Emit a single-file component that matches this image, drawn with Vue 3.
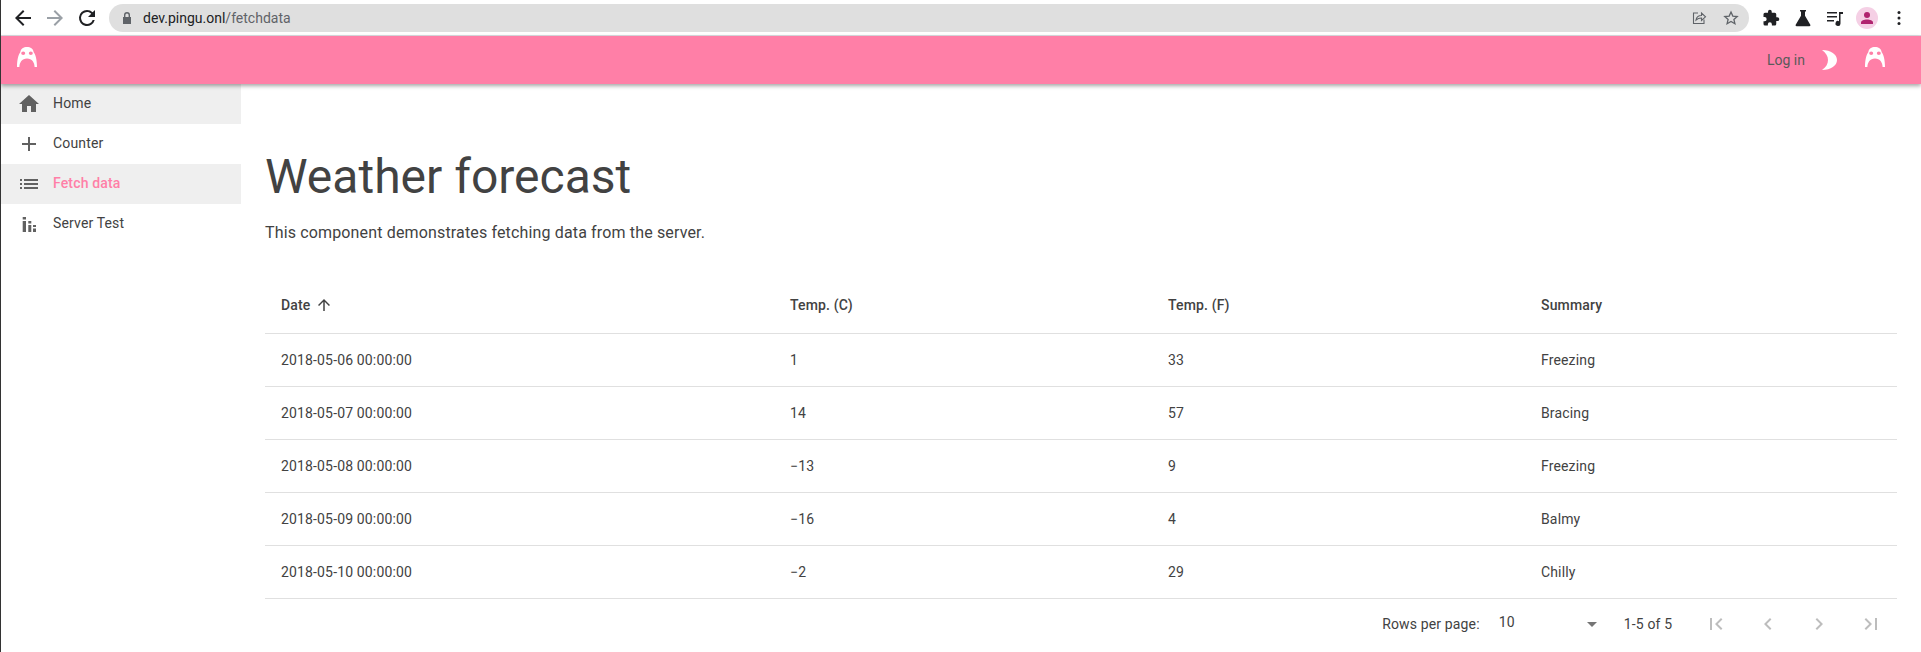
<template>
  <div class="window">
    <div class="browser">
      <button class="nav-btn">
        <svg viewBox="0 0 24 24" width="24" height="24"><path d="M20 11H7.830l5.590-5.590L12 4l-8 8 8 8 1.410-1.410L7.830 13H20z" fill="#202124" /></svg>
      </button>
      <button class="nav-btn">
        <svg viewBox="0 0 24 24" width="24" height="24"><path d="M4 13h12.170l-5.590 5.590L12 20l8-8-8-8-1.410 1.410L16.170 11H4z" fill="#9aa0a6" /></svg>
      </button>
      <button class="nav-btn">
        <svg viewBox="0 0 24 24" width="24" height="24"><path d="M17.650 6.350A7.960 7.960 0 0 0 12 4a8 8 0 1 0 7.730 10h-2.080A6 6 0 1 1 12 6c1.660 0 3.140.69 4.220 1.780L13 11h7V4z" fill="#202124" /></svg>
      </button>
      <div class="omnibox">
        <svg class="lock" viewBox="0 0 12 14" width="12" height="14"><path d="M3 6V4a3 3 0 0 1 6 0v2h1v7H2V6zm1.400 0h3.200V4a1.600 1.600 0 0 0-3.200 0z" fill="#5f6368" /></svg>
        <span class="url"><span class="host">dev.pingu.onl</span>/fetchdata</span>
        <svg class="share" viewBox="0 0 16 16" width="16" height="16" fill="none" stroke="#5f6368" stroke-width="1.100"><path d="M7 3H2.500v10.500h10.500V9.500" /><path d="M5 10c.5-3 2.500-4.500 5.500-4.500V3l4 3.800-4 3.700V8c-2.200 0-4 .6-5.500 2z" /></svg>
        <svg class="star" viewBox="0 0 16 16" width="16" height="16" fill="none" stroke="#5f6368" stroke-width="1.300"><path d="M8 2l1.800 4.100 4.400.4-3.300 2.900 1 4.300L8 11.400l-3.900 2.300 1-4.300-3.300-2.900 4.400-.4z" /></svg>
      </div>
      <div class="extensions">
        <div class="ext">
          <svg viewBox="0 0 24 24" width="18" height="18"><path d="M20.500 11H19V7a2 2 0 0 0-2-2h-4V3.500a2.500 2.500 0 0 0-5 0V5H4a2 2 0 0 0-2 2v3.800h1.500a2.700 2.700 0 0 1 0 5.400H2V20a2 2 0 0 0 2 2h3.800v-1.500a2.700 2.700 0 0 1 5.400 0V22H17a2 2 0 0 0 2-2v-4h1.500a2.500 2.500 0 0 0 0-5z" fill="#202124" /></svg>
        </div>
        <div class="ext">
          <svg viewBox="0 0 20 20" width="20" height="20"><path d="M7 2h6v1.500h-1v4.300l5.300 9a1 1 0 0 1-.9 1.500H3.600a1 1 0 0 1-.9-1.500l5.300-9V3.500H7z" fill="#202124" /></svg>
        </div>
        <div class="ext">
          <svg viewBox="0 0 20 20" width="20" height="20"><path d="M2 4h10v1.400H2zM2 8h10v1.400H2zM2 12h7v1.400H2zM14 4h4v2h-2.500v9.500a2.500 2.500 0 1 1-1.500-2.300z" fill="#202124" /></svg>
        </div>
        <div class="ext">
          <div class="avatar">
            <svg viewBox="0 0 16 16" width="16" height="16"><circle cx="8" cy="5" r="3" fill="#b0246f" /><path d="M2 14v-1.500C2 10.500 5 9.500 8 9.500s6 1 6 3V14z" fill="#b0246f" /></svg>
          </div>
        </div>
        <div class="ext">
          <svg viewBox="0 0 4 16" width="4" height="16"><circle cx="2" cy="2.500" r="1.500" fill="#202124" /><circle cx="2" cy="8" r="1.500" fill="#202124" /><circle cx="2" cy="13.500" r="1.500" fill="#202124" /></svg>
        </div>
      </div>
    </div>

    <header class="appbar">
      <svg class="penguin" viewBox="0 0 24 24" width="24" height="24"><path :d="penguin" fill="#fff" fill-rule="evenodd" /></svg>
      <div class="appbar-right">
        <span class="login">Log in</span>
        <svg class="moon" viewBox="0 0 24 24" width="24" height="24"><path d="M4 2c9 0 15 4.500 15 10S13 22 4 22c4-3 6-6 6-10S8 5 4 2z" fill="#fff" /></svg>
        <svg class="penguin" viewBox="0 0 24 24" width="24" height="24"><path :d="penguin" fill="#fff" fill-rule="evenodd" /></svg>
      </div>
    </header>

    <div class="body">
      <nav class="drawer">
        <a v-for="item in navItems" :key="item.label" class="nav-item" :class="{ shaded: item.shaded, active: item.active }">
          <svg viewBox="0 0 24 24" width="24" height="24"><path :d="item.icon" fill="#616161" /></svg>
          <span>{{ item.label }}</span>
        </a>
      </nav>

      <main class="content">
        <h1>Weather forecast</h1>
        <p class="lead">This component demonstrates fetching data from the server.</p>

        <table class="grid">
          <colgroup>
            <col class="c1" />
            <col class="c2" />
            <col class="c3" />
            <col />
          </colgroup>
          <thead>
            <tr>
              <th>
                Date
                <svg class="sort" viewBox="0 0 24 24" width="18" height="18"><path d="M4 12l1.410 1.410L11 7.830V20h2V7.830l5.580 5.590L20 12l-8-8-8 8z" fill="#424242" /></svg>
              </th>
              <th>Temp. (C)</th>
              <th>Temp. (F)</th>
              <th>Summary</th>
            </tr>
          </thead>
          <tbody>
            <tr v-for="row in rows" :key="row.date">
              <td>{{ row.date }}</td>
              <td>{{ row.c }}</td>
              <td>{{ row.f }}</td>
              <td>{{ row.summary }}</td>
            </tr>
          </tbody>
        </table>

        <div class="pager">
          <span class="rows-label">Rows per page:</span>
          <div class="rows-select">
            <span class="rows-value">10</span>
            <svg viewBox="0 0 24 24" width="24" height="24"><path d="M7 10l5 5 5-5z" fill="#757575" /></svg>
          </div>
          <span class="range">1-5 of 5</span>
          <div class="pager-btns">
            <svg viewBox="0 0 24 24" width="24" height="24"><path d="M18.410 16.590L13.820 12l4.590-4.590L17 6l-6 6 6 6zM6 6h2v12H6z" fill="#bdbdbd" /></svg>
            <svg viewBox="0 0 24 24" width="24" height="24"><path d="M15.410 7.410L14 6l-6 6 6 6 1.410-1.410L10.830 12z" fill="#bdbdbd" /></svg>
            <svg viewBox="0 0 24 24" width="24" height="24"><path d="M10 6L8.590 7.410 13.170 12l-4.580 4.590L10 18l6-6z" fill="#bdbdbd" /></svg>
            <svg viewBox="0 0 24 24" width="24" height="24"><path d="M5.590 7.410L10.180 12l-4.590 4.590L7 18l6-6-6-6zM16 6h2v12h-2z" fill="#bdbdbd" /></svg>
          </div>
        </div>
      </main>
    </div>
  </div>
</template>

<script setup>
// body with two pink eyes cut out, open arch between the feet
const penguin = 'M12 2C8.500 2 5.800 3.500 5.300 7.200 3.400 9.800 2 14.500 2 22h2.400C4.400 17.500 7 13.400 12 13.400s7.600 4.100 7.600 8.600H22c0-7.500-1.400-12.200-3.300-14.800C18.200 3.500 15.500 2 12 2zM8.200 6.600a2 1.700 0 1 0 0 3.400 2 1.700 0 0 0 0-3.400zm7.600 0a2 1.700 0 1 0 0 3.400 2 1.700 0 0 0 0-3.400z'

const navItems = [
  { label: 'Home', shaded: true, icon: 'M10 20v-6h4v6h5v-8h3L12 3 2 12h3v8z' },
  { label: 'Counter', icon: 'M19 13h-6v6h-2v-6H5v-2h6V5h2v6h6z' },
  { label: 'Fetch data', shaded: true, active: true, icon: 'M3 13h2v-2H3zm0 4h2v-2H3zm0-8h2V7H3zm4 4h14v-2H7zm0 4h14v-2H7zM7 7v2h14V7z' },
  { label: 'Server Test', icon: 'M5.700 9h3.300v11H5.700zM5.700 5h3.300v2.500H5.700zM11.300 9h3v2.500h-3zM11.300 13h3v7h-3zM16 13h3v2h-3zM16 16.500h3V20h-3z' }
]

const rows = [
  { date: '2018-05-06 00:00:00', c: '1', f: '33', summary: 'Freezing' },
  { date: '2018-05-07 00:00:00', c: '14', f: '57', summary: 'Bracing' },
  { date: '2018-05-08 00:00:00', c: '−13', f: '9', summary: 'Freezing' },
  { date: '2018-05-09 00:00:00', c: '−16', f: '4', summary: 'Balmy' },
  { date: '2018-05-10 00:00:00', c: '−2', f: '29', summary: 'Chilly' }
]
</script>

<style>
html, body {
  margin: 0;
  background: #fff;
}
</style>

<style scoped>
.window {
  height: 652px;
  overflow: hidden;
  border-left: 1px solid #333;
  font-family: Roboto, "Liberation Sans", sans-serif;
  letter-spacing: 0.15px;
  color: #424242;
  background: #fff;
  display: flex;
  flex-direction: column;
}

.browser {
  height: 36px;
  flex: none;
  box-sizing: border-box;
  border-bottom: 1px solid #dadce0;
  display: flex;
  align-items: center;
  padding-left: 6px;
  letter-spacing: normal;
}
.nav-btn {
  width: 32px;
  height: 32px;
  padding: 0;
  border: none;
  background: none;
  display: flex;
  align-items: center;
  justify-content: center;
}
.omnibox {
  margin-left: 6px;
  width: 1640px;
  height: 28px;
  border-radius: 14px;
  background: #dfdfdf;
  display: flex;
  align-items: center;
  padding-left: 12px;
  box-sizing: border-box;
}
.url {
  margin-left: 10px;
  color: #5f6368;
  font-size: 14px;
}
.host {
  color: #202124;
}
.share {
  margin-left: auto;
}
.star {
  margin: 0 10px 0 16px;
}
.extensions {
  display: flex;
  align-items: center;
  margin-left: 6px;
}
.ext {
  width: 32px;
  display: flex;
  align-items: center;
  justify-content: center;
}
.avatar {
  width: 22px;
  height: 22px;
  border-radius: 50%;
  background: #f5d0e5;
  display: flex;
  align-items: center;
  justify-content: center;
}

.appbar {
  height: 48px;
  flex: none;
  background: #ff7fa7;
  box-shadow: 0 2px 4px rgba(0, 0, 0, 0.35);
  display: flex;
  align-items: center;
  padding: 0 34px 0 14px;
  position: relative;
  z-index: 2;
}
.appbar-right {
  margin-left: auto;
  display: flex;
  align-items: center;
}
.login {
  font-size: 14px;
  letter-spacing: 0;
  color: #5a5a5a;
  margin-right: 13px;
}
.moon {
  margin-right: 21px;
}
.penguin {
  flex: none;
  margin-bottom: 6px;
}

.body {
  display: flex;
  flex: 1;
}
.drawer {
  width: 240px;
  flex: none;
}
.nav-item {
  height: 40px;
  display: flex;
  align-items: center;
  gap: 12px;
  padding-left: 16px;
  font-size: 14px;
  color: #424242;
}
.nav-item span {
  margin-top: -2px;
}
.nav-item.shaded {
  background: #efefef;
}
.nav-item.active {
  color: #ff7fa7;
  font-weight: 500;
}

.content {
  flex: 1;
  min-width: 0;
  padding: 0 24px;
}
h1 {
  margin: 61px 0 0;
  font-size: 48px;
  font-weight: 400;
  letter-spacing: 0;
  line-height: 64px;
  color: #424242;
}
.lead {
  margin: 12px 0 0;
  font-size: 16px;
  line-height: 24px;
}

.grid {
  width: 100%;
  margin-top: 31px;
  table-layout: fixed;
  border-collapse: collapse;
  font-size: 14px;
}
.c1 {
  width: 509px;
}
.c2 {
  width: 378px;
}
.c3 {
  width: 373px;
}
th {
  height: 57px;
  padding: 0 16px;
  text-align: left;
  font-weight: 500;
  border-bottom: 1px solid #e0e0e0;
}
.sort {
  vertical-align: -4px;
  margin-left: 1px;
}
td {
  height: 52px;
  padding: 0 16px;
  border-bottom: 1px solid #e0e0e0;
}

.pager {
  height: 50px;
  display: flex;
  align-items: center;
  font-size: 14px;
}
.rows-label {
  margin-left: auto;
  margin-right: -1px;
}
.rows-select {
  width: 105px;
  margin-left: 20px;
  display: flex;
  align-items: center;
  justify-content: space-between;
}
.rows-value {
  margin-top: -4px;
}
.range {
  margin-left: 20px;
}
.pager-btns {
  display: flex;
  gap: 27.600px;
  margin-left: 32px;
  margin-right: 14px;
}
</style>
